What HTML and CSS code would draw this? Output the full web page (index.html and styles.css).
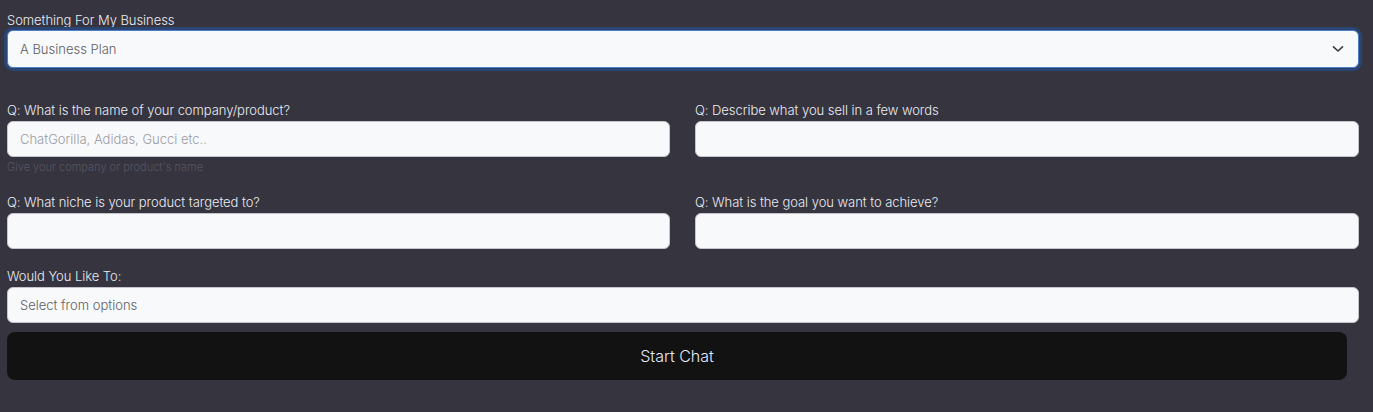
FILE: index.html
```html
<!DOCTYPE html>
<html>
<head>
<meta charset="utf-8">
<link rel="stylesheet" href="styles.css">
</head>
<body>
<form class="form">
  <div class="field">
    <label class="label">Something For My Business</label>
    <div class="select focused">
      <span class="select-value">A Business Plan</span>
      <svg class="chevron" width="12" height="8" viewBox="0 0 12 8"><path d="M1.5 1.8 L6 6 L10.5 1.8" fill="none" stroke="#3a3a44" stroke-width="1.6" stroke-linecap="round" stroke-linejoin="round"/></svg>
    </div>
  </div>

  <div class="grid">
    <div class="field">
      <label class="label">Q: What is the name of your company/product?</label>
      <div class="input"><span class="placeholder">ChatGorilla, Adidas, Gucci etc..</span></div>
      <div class="help">Give your company or product's name</div>
    </div>
    <div class="field">
      <label class="label">Q: Describe what you sell in a few words</label>
      <div class="input"></div>
    </div>
    <div class="field">
      <label class="label">Q: What niche is your product targeted to?</label>
      <div class="input"></div>
    </div>
    <div class="field">
      <label class="label">Q: What is the goal you want to achieve?</label>
      <div class="input"></div>
    </div>
  </div>

  <div class="field last">
    <label class="label">Would You Like To:</label>
    <div class="input"><span class="placeholder dark">Select from options</span></div>
  </div>

  <button type="button" class="submit">Start Chat</button>
</form>
</body>
</html>
```
FILE: styles.css
```css
* { box-sizing: border-box; }
html, body { margin: 0; padding: 0; }
body {
  background: #35343f;
  font-family: Inter, Roboto, "Noto Sans", sans-serif;
  color: #e9e9ef;
  width: 1373px;
  height: 412px;
  overflow: hidden;
}
.form {
  padding: 11px 14px 0 7px;
  display: flex;
  flex-direction: column;
}
.field { display: flex; flex-direction: column; }
.label {
  font-size: 13px;
  line-height: 18px;
  font-weight: 300;
  color: #ececf2;
  margin-bottom: 2px;
  letter-spacing: -0.05px;
}
.select {
  height: 38px;
  background: #f8f9fb;
  border: 1px solid #4d7cc8;
  border-radius: 6px;
  box-shadow: 0 0 0 3px #2b4573;
  display: flex;
  align-items: center;
  justify-content: space-between;
  padding: 0 14px 0 12px;
  margin-top: -1px;
}
.select-value { font-size: 13px; color: #5d5d66; font-weight: 300; }
.chevron { display: block; }
.grid {
  margin-top: 33px;
  display: grid;
  grid-template-columns: 663px 1fr;
  column-gap: 25px;
  row-gap: 19px;
}
.input {
  height: 36px;
  background: #f8f9fb;
  border: 1px solid #c4c5cc;
  border-radius: 6px;
  display: flex;
  align-items: center;
  padding: 0 12px;
}
.placeholder { font-size: 13px; color: #9a9aa3; font-weight: 300; }
.placeholder.dark { color: #5d5d66; }
.help {
  margin-top: 3px;
  font-size: 11px;
  line-height: 14px;
  color: #575663;
  font-weight: 300;
}
.last { margin-top: 18px; }
.submit {
  margin-top: 9px;
  margin-right: 12px;
  height: 48px;
  background: #121212;
  border: none;
  border-radius: 8px;
  color: #e3ebff;
  font-family: Inter, Roboto, "Noto Sans", sans-serif;
  font-size: 16px;
  font-weight: 300;
}
```
